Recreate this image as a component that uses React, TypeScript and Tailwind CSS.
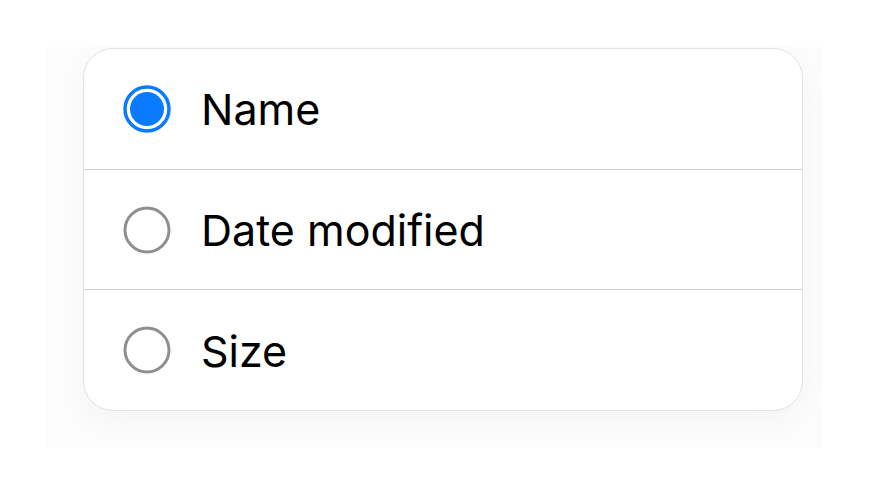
const options = [
  { label: "Name", selected: true },
  { label: "Date modified", selected: false },
  { label: "Size", selected: false },
];

const Radio = ({ selected }: { selected: boolean }) => {
  if (selected) {
    return (
      <svg width="48" height="48" viewBox="0 0 48 48" className="shrink-0">
        <circle cx="24" cy="24" r="22" fill="none" stroke="#0a7aff" strokeWidth="3.5" />
        <circle cx="24" cy="24" r="17" fill="#0a7aff" />
      </svg>
    );
  }
  return (
    <svg width="48" height="48" viewBox="0 0 48 48" className="shrink-0">
      <circle cx="24" cy="24" r="22" fill="none" stroke="#8e8e8e" strokeWidth="3" />
    </svg>
  );
};

export default function App() {
  return (
    <div className="w-[871px] h-[495px] bg-white pt-[47px] pl-[47px]" style={{ fontFamily: "Inter, 'Noto Sans', sans-serif" }}>
      <div className="w-[776px] h-[401px] overflow-hidden bg-[#fcfcfc] px-[36px] pt-[1px]">
        <div className="w-[720px] h-[363px] rounded-[30px] border-[1.5px] border-[#e3e3e3] bg-white shadow-[0_10px_30px_rgba(0,0,0,0.035)] flex flex-col overflow-hidden">
          {options.map((o, i) => (
            <div
              key={o.label}
              className={`flex-1 flex items-center gap-[30px] pl-[39px] ${i > 0 ? "border-t border-[#cfcfcf]" : ""}`}
            >
              <Radio selected={o.selected} />
              <span className="text-[43px] text-black leading-none pt-[2px]">{o.label}</span>
            </div>
          ))}
        </div>
      </div>
    </div>
  );
}
